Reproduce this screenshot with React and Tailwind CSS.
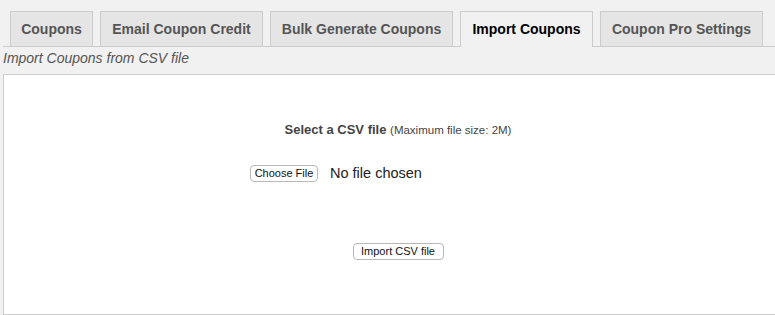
import React from 'react';

const tabs = [
  { name: 'Coupons', w: 'w-[83px]' },
  { name: 'Email Coupon Credit', w: 'w-[163px]' },
  { name: 'Bulk Generate Coupons', w: 'w-[183px]' },
  { name: 'Import Coupons', w: 'w-[133px]', active: true },
  { name: 'Coupon Pro Settings', w: 'w-[163px]' },
];

const App = () => {
  return (
    <div className="w-[775px] h-[315px] overflow-hidden bg-[#f1f1f1] font-['Liberation_Sans',Arial,sans-serif]">
      {/* Tabs */}
      <div className="ml-[3px] w-[800px] pt-[11px] flex border-b border-[#ccc]">
        {tabs.map((tab) => (
          <div
            key={tab.name}
            className={`ml-[7px] ${tab.w} border border-b-0 border-[#ccc] py-[5px] text-center text-[14px] leading-[24px] font-bold whitespace-nowrap ${
              tab.active ? 'bg-[#f1f1f1] text-black -mb-px border-b border-b-[#f1f1f1]' : 'bg-[#e5e5e5] text-[#555]'
            }`}
          >
            {tab.name}
          </div>
        ))}
      </div>

      {/* Description */}
      <p className="ml-[3px] mt-px text-[14px] leading-[20px] italic text-[#555]">Import Coupons from CSV file</p>

      {/* Upload box */}
      <div className="ml-[3px] mt-[6px] w-[790px] h-[241px] bg-white border border-[#ccc] flex flex-col items-center pt-[45px]">
        <div className="text-[13px] leading-[20px] text-[#444]">
          <span className="font-bold">Select a CSV file</span>{' '}
          <span className="text-[11.5px]">(Maximum file size: 2M)</span>
        </div>

        <div className="self-start ml-[246px] mt-[25px] flex items-center gap-[12px]">
          <button className="w-[68px] h-[17px] bg-white border border-[#b8b8b8] rounded-[4px] text-[11px] leading-[15px] text-[#111] text-center">
            Choose File
          </button>
          <span className="text-[14.5px] leading-[17px] text-[#222]">No file chosen</span>
        </div>

        <button className="mt-[61px] w-[91px] h-[17px] bg-white border border-[#b8b8b8] rounded-[4px] text-[11px] leading-[15px] text-[#111] text-center">
          Import CSV file
        </button>
      </div>
    </div>
  );
};

export default App;
